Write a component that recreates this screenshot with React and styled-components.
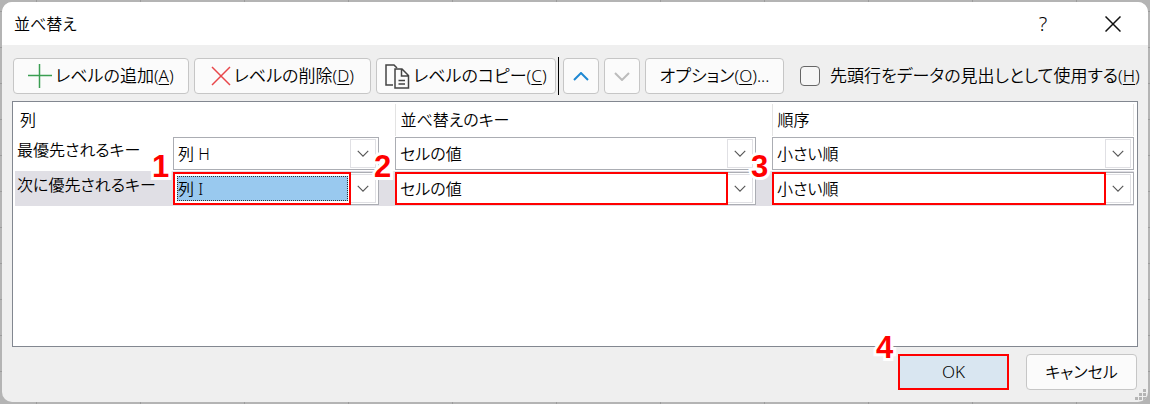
import React from "react";
import styled, { createGlobalStyle } from "styled-components";

const GlobalStyle = createGlobalStyle`
* {
  box-sizing: border-box;
}
body {
  margin: 0;
  color: #000;
  font: 350 16px/24px "Noto Sans", "Noto Sans CJK JP", sans-serif;
  font-feature-settings: "palt" 1;
}
button, select, input {
  font: inherit;
  font-feature-settings: inherit;
  color: inherit;
}
`;

// worksheet that shows around the edges of the dialog
const Sheet = styled.div`
  display: flex;
  min-height: 100vh;
  padding: 2px;
  background-color: #b4b4b4;
  background-image: linear-gradient(90deg, #9c9c9c 1px, transparent 1px), linear-gradient(#9c9c9c 1px, transparent 1px);
  background-size: 104px 36px;
  background-position: 36px 11px;
`;

const Dialog = styled.form`
  display: flex;
  flex-direction: column;
  flex: 1;
  min-width: 0;
  overflow: hidden;
  border-radius: 10px;
  background: #efefef;
  position: relative;
`;

const TitleBar = styled.header`
  display: flex;
  align-items: center;
  height: 43px;
  padding: 0 20px 0 12px;
  background: #fff;
`;

const Title = styled.h1`
  flex: 1;
  margin: 0;
  font-size: 16px;
  font-weight: inherit;
`;

const TitleButton = styled.button`
  display: flex;
  align-items: center;
  justify-content: center;
  width: 30px;
  height: 30px;
  margin-left: 40px;
  padding: 0;
  border: 0;
  background: none;
  font-size: 20px;
`;

const Toolbar = styled.div`
  display: flex;
  align-items: center;
  gap: 5px;
  padding: 12px 10px 6px 11px;
  font-size: 17px;
`;

const Button = styled.button`
  display: flex;
  flex: none;
  align-items: center;
  justify-content: center;
  gap: 3px;
  width: ${(props) => props.$width}px;
  height: 36px;
  padding: 0;
  border: 1px solid #c6c6c6;
  border-radius: 4px;
  background: #fbfbfb;
  white-space: nowrap;
`;

const OkButton = styled(Button)`
  border: 2px solid #f00;
  border-radius: 0;
  background: #d9e6f1;
  font-size: 17px;
`;

const Divider = styled.span`
  flex: none;
  width: 1px;
  height: 38px;
  margin: 0 -1px 0 -3px;
  background: #000;
`;

const Underline = styled.u`
  text-underline-offset: 2px;
`;

const CheckLabel = styled.label`
  display: flex;
  flex: none;
  align-items: center;
  gap: 10px;
  margin-left: 11px;
  white-space: nowrap;
`;

const CheckBox = styled.input`
  appearance: none;
  width: 20px;
  height: 20px;
  margin: 0;
  border: 1px solid #666;
  border-radius: 4px;
  background: #f6f6f6;
  &:checked {
    background: #0067c0;
  }
`;

const LevelList = styled.div`
  flex: 1;
  min-height: 246px;
  margin: 0 10px;
  padding: 2px 3px 2px 2px;
  border: 1px solid #828790;
  background: #fff;
`;

const Levels = styled.table`
  width: 100%;
  table-layout: fixed;
  border-collapse: collapse;
`;

const Col = styled.col`
  width: ${(props) => props.$width}px;
`;

const HeadCell = styled.th`
  height: 32px;
  padding: 0 5px;
  border-right: 1px solid #e3e3e3;
  font-weight: inherit;
  text-align: left;
`;

const LevelRow = styled.tr`
  height: 35px;
  background: ${(props) => (props.$selected ? "#e0dfe5" : "transparent")};
`;

const LevelName = styled.th`
  padding: 2px 2px 0;
  font-weight: inherit;
  text-align: left;
  vertical-align: top;
  white-space: nowrap;
`;

const SelectCell = styled.td`
  padding: 1px ${(props) => (props.$last ? 0 : 16)}px 1px 0;
`;

const SelectBox = styled.div`
  position: relative;
  display: flex;
  height: 33px;
  border: 1px solid #abadb3;
  background: #fff;
`;

const Select = styled.select`
  appearance: none;
  width: 100%;
  padding: 0 30px 0 4px;
  border: 0;
  border-radius: 0;
  outline: 0;
  background: transparent;
`;

const Arrow = styled.span`
  position: absolute;
  top: 1px;
  right: 2px;
  bottom: 1px;
  display: flex;
  align-items: center;
  justify-content: center;
  width: 26px;
  border: 1px solid #e0e0e4;
  background: #fff;
  pointer-events: none;
`;

const Frame = styled.span`
  position: absolute;
  inset: -1px 27px -1px -1px;
  border: 2px solid #f00;
  pointer-events: none;
`;

// dotted focus rectangle with its blue fill, under the select text
const Focus = styled.span`
  position: absolute;
  inset: 3px 30px 3px 3px;
  border: 1px dotted #333;
  background: #99c9ef;
  & + select {
    position: relative;
  }
`;

const Step = styled.span`
  position: absolute;
  left: -22px;
  top: -22px;
  z-index: 1;
  color: #f00;
  font: bold 31px/31px "Liberation Sans", Arial, sans-serif;
  -webkit-text-stroke: 6px #fff;
  paint-order: stroke fill;
  pointer-events: none;
`;

const Footer = styled.footer`
  display: flex;
  justify-content: flex-end;
  gap: 17px;
  padding: 7px 11px 12px;
`;

const OkBox = styled.div`
  position: relative;
`;

const Grip = styled.svg`
  position: absolute;
  right: 2px;
  bottom: 2px;
`;

const Chevron = ({ size, color, up, weight = 1 }) => (
  <svg width={size} height={size / 2 + 1} viewBox="0 0 16 9" fill="none" stroke={color} strokeWidth={weight} aria-hidden="true">
    <path d={up ? "M1 8l7-7 7 7" : "M1 1l7 7 7-7"} />
  </svg>
);

const PlusIcon = () => (
  <svg width="24" height="24" fill="none" stroke="#3a9e52" strokeWidth="1.5" aria-hidden="true">
    <path d="M11.500 0v24M0 11.500h24" />
  </svg>
);

const CrossIcon = () => (
  <svg width="20" height="20" fill="none" stroke="#e8474b" strokeWidth="1.5" aria-hidden="true">
    <path d="M1 1l18 18M19 1L1 19" />
  </svg>
);

const CopyIcon = () => (
  <svg width="25" height="25" fill="none" stroke="#444" strokeWidth="1.5" aria-hidden="true">
    <path d="M8 21H1V1h8l3 3" />
    <path d="M10 5h7l6.500 6.500V24H10zM16.500 5v7h7M13.500 16.500h6.500M13.500 20h6.500" fill="#fbfbfb" />
  </svg>
);

const LevelSelect = ({ label, value, options, step, focused }) => (
  <SelectBox>
    {focused && <Focus />}
    <Select aria-label={label} defaultValue={value}>
      {options.map((option) => (
        <option key={option}>{option}</option>
      ))}
    </Select>
    <Arrow>
      <Chevron size={12} color="#555" weight={1.5} />
    </Arrow>
    {step && <Frame />}
    {step && <Step>{step}</Step>}
  </SelectBox>
);

const columns = ["列 H", "列 I"];
const keys = ["セルの値", "セルの色", "フォントの色"];
const orders = ["小さい順", "大きい順"];

const levels = [
  { name: "最優先されるキー", column: "列 H", steps: [] },
  { name: "次に優先されるキー", column: "列 I", steps: [1, 2, 3], selected: true },
];

const App = () => {
  return (
    <Sheet>
      <GlobalStyle />
      <Dialog onSubmit={(e) => e.preventDefault()}>
        <TitleBar>
          <Title>並べ替え</Title>
          <TitleButton type="button">?</TitleButton>
          <TitleButton type="button" aria-label="閉じる">
            <svg width="16" height="16" fill="none" stroke="#111" strokeWidth="1.5">
              <path d="M.5.5l15 15M15.500.5l-15 15" />
            </svg>
          </TitleButton>
        </TitleBar>

        <Toolbar>
          <Button type="button" $width={176}>
            <PlusIcon />
            <span>レベルの追加(<Underline>A</Underline>)</span>
          </Button>
          <Button type="button" $width={177}>
            <CrossIcon />
            <span>レベルの削除(<Underline>D</Underline>)</span>
          </Button>
          <Button type="button" $width={180}>
            <CopyIcon />
            <span>レベルのコピー(<Underline>C</Underline>)</span>
          </Button>
          <Divider />
          <Button type="button" aria-label="上へ移動" $width={36}>
            <Chevron size={16} color="#1e88d2" weight={2} up />
          </Button>
          <Button type="button" aria-label="下へ移動" $width={36}>
            <Chevron size={16} color="#bcbcbc" weight={2} />
          </Button>
          <Button type="button" $width={139}>
            <span>オプション(<Underline>O</Underline>)...</span>
          </Button>
          <CheckLabel>
            <CheckBox type="checkbox" />
            <span>先頭行をデータの見出しとして使用する(<Underline>H</Underline>)</span>
          </CheckLabel>
        </Toolbar>

        <LevelList>
          <Levels>
            <colgroup>
              <Col $width={158} />
              <Col $width={222} />
              <Col $width={377} />
              <col />
            </colgroup>
            <thead>
              <tr>
                <HeadCell colSpan={2}>列</HeadCell>
                <HeadCell>並べ替えのキー</HeadCell>
                <HeadCell>順序</HeadCell>
              </tr>
            </thead>
            <tbody>
              {levels.map((level) => (
                <LevelRow key={level.name} $selected={level.selected}>
                  <LevelName scope="row">{level.name}</LevelName>
                  <SelectCell>
                    <LevelSelect label="列" value={level.column} options={columns} step={level.steps[0]} focused={level.selected} />
                  </SelectCell>
                  <SelectCell>
                    <LevelSelect label="並べ替えのキー" value="セルの値" options={keys} step={level.steps[1]} />
                  </SelectCell>
                  <SelectCell $last>
                    <LevelSelect label="順序" value="小さい順" options={orders} step={level.steps[2]} />
                  </SelectCell>
                </LevelRow>
              ))}
            </tbody>
          </Levels>
        </LevelList>

        <Footer>
          <OkBox>
            <OkButton type="submit" $width={111}>OK</OkButton>
            <Step>4</Step>
          </OkBox>
          <Button type="button" $width={111}>キャンセル</Button>
        </Footer>
        <Grip width="11" height="11" fill="#b5b5b5" aria-hidden="true">
          <path d="M8 0h3v3H8zM4 4h3v3H4zM8 4h3v3H8zM0 8h3v3H0zM4 8h3v3H4zM8 8h3v3H8z" />
        </Grip>
      </Dialog>
    </Sheet>
  );
};

export default App;
